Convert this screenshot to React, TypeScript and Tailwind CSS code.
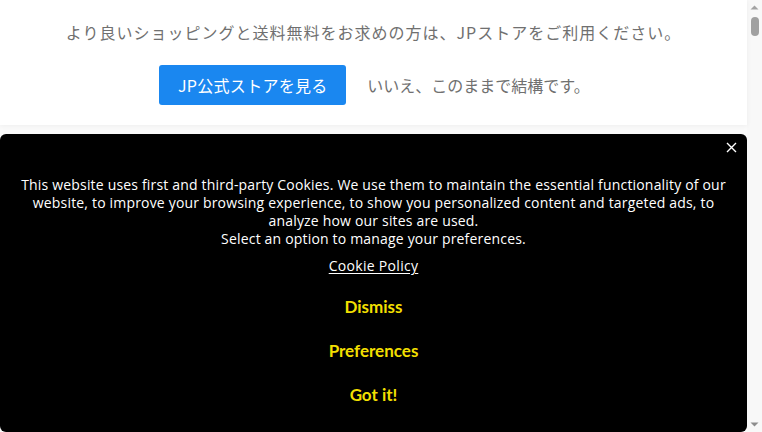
import React from "react";

function Scrollbar() {
  return (
    <div className="w-[15px] h-full bg-[#f8f8f8] flex flex-col items-center justify-between shrink-0">
      <div className="flex flex-col items-center">
        <svg width="15" height="15" viewBox="0 0 15 15" className="mt-0">
          <path d="M3.5 9.5 L7.5 5.5 L11.5 9.5 Z" fill="#a3a3a3" />
        </svg>
        <div className="w-[8px] h-[19px] rounded-full bg-[#a0a0a0] mt-[2px]" />
      </div>
      <svg width="15" height="15" viewBox="0 0 15 15">
        <path d="M3.5 5.5 L11.5 5.5 L7.5 9.5 Z" fill="#8d8d8d" />
      </svg>
    </div>
  );
}

export default function App() {
  return (
    <div className="h-[432px] w-[762px] overflow-hidden flex bg-[#fafafa]">
      <div className="relative flex-1 h-full bg-[#fafafa]" style={{ fontFamily: "Lato, 'Noto Sans CJK JP', sans-serif" }}>
        <div className="bg-white h-[125px] flex flex-col items-center pt-[20px] shadow-[0_1px_5px_rgba(0,0,0,0.05)]">
          <p className="text-[16px] leading-[24px] text-[#707070] tracking-[1px]" style={{ fontFamily: "'Noto Sans CJK JP', sans-serif" }}>
            より良いショッピングと送料無料をお求めの方は、JPストアをご利用ください。
          </p>
          <div className="flex items-center mt-[21px] gap-[21px] pl-[2px]" style={{ fontFamily: "'Noto Sans CJK JP', sans-serif" }}>
            <button className="w-[187px] h-[40px] rounded-[3px] bg-[#1a87f0] text-white text-[16px] tracking-[0.3px]">
              JP公式ストアを見る
            </button>
            <span className="text-[16px] text-[#707070]">いいえ、このままで結構です。</span>
          </div>
        </div>
        <div className="absolute left-0 right-0 bottom-0 h-[298px] bg-black rounded-[6px] text-white flex flex-col items-center">
          <button className="absolute right-[10px] top-[7px] w-[12px] h-[12px] flex items-center justify-center">
            <svg width="11" height="11" viewBox="0 0 11 11" stroke="white" strokeWidth="1.4">
              <path d="M1 1 L10 10 M10 1 L1 10" />
            </svg>
          </button>
          <p className="mt-[42px] text-[14px] leading-[18px] text-center px-[16px] font-medium tracking-[0.18px]" style={{ fontFamily: "'Open Sans', sans-serif" }}>
            This website uses first and third-party Cookies. We use them to maintain the essential functionality of our website, to improve your browsing experience, to show you personalized content and targeted ads, to analyze how our sites are used.
            <br />
            Select an option to manage your preferences.
          </p>
          <a className="mt-[9px] text-[14px] leading-[18px] underline underline-offset-2 font-medium tracking-[0.3px]" style={{ fontFamily: "'Open Sans', sans-serif" }}>Cookie Policy</a>
          <div className="flex flex-col items-center mt-[22px] gap-[24px] text-[#f2df00] font-bold text-[17px] leading-[20px]">
            <span>Dismiss</span>
            <span>Preferences</span>
            <span>Got it!</span>
          </div>
        </div>
      </div>
      <Scrollbar />
    </div>
  );
}
